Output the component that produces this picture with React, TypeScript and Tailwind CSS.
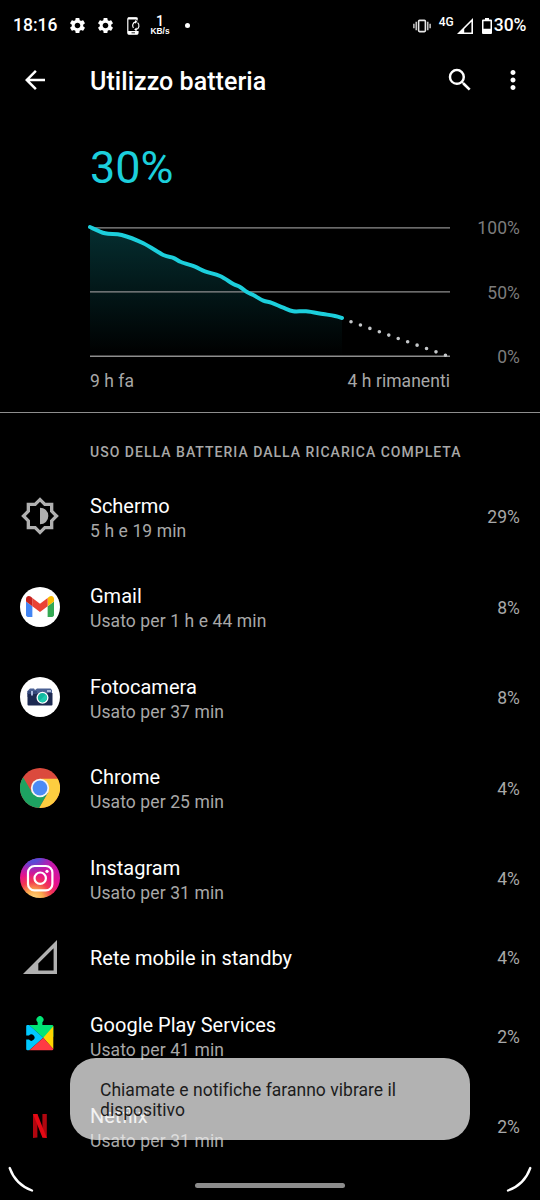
import type { ReactNode } from 'react';
import { MdArrowBack, MdMoreVert, MdSearch, MdSettings } from 'react-icons/md';

type Point = [number, number];

const LEVELS: Point[] = [
  [0, 9], [15, 15.3], [31.7, 17], [53.3, 25.3], [73.3, 37], [83.3, 39.8], [91, 44], [105, 48.7], [115, 53.3],
  [130, 58], [143.3, 66], [150, 69], [157, 74], [163.3, 77], [173.3, 82.7], [181.7, 84.8], [193.3, 89.7],
  [203.3, 93.2], [216, 93.3], [233, 96], [245, 98], [252, 100],
];

// Catmull-Rom spline through the points
function smoothPath(pts: Point[]) {
  let d = `M${pts[0][0]} ${pts[0][1]}`;
  for (let i = 0; i < pts.length - 1; i++) {
    const p0 = pts[i - 1] ?? pts[i];
    const p1 = pts[i];
    const p2 = pts[i + 1];
    const p3 = pts[i + 2] ?? p2;
    d += `C${p1[0] + (p2[0] - p0[0]) / 6} ${p1[1] + (p2[1] - p0[1]) / 6} ${p2[0] - (p3[0] - p1[0]) / 6} ${p2[1] - (p3[1] - p1[1]) / 6} ${p2[0]} ${p2[1]}`;
  }
  return d;
}

function BatteryChart() {
  const line = smoothPath(LEVELS);
  return (
    <svg width="360" height="149" viewBox="0 0 360 149" className="overflow-visible">
      <defs>
        <linearGradient id="area" x1="0" y1="9" x2="0" y2="138" gradientUnits="userSpaceOnUse">
          <stop offset="0" stopColor="#052e30" />
          <stop offset="1" stopColor="#052e30" stopOpacity="0" />
        </linearGradient>
      </defs>
      <path d={`${line}V138H0Z`} fill="url(#area)" />
      <path d="M0 9.9H360M0 73.9H360M0 138.2H360" stroke="#8e8e8e" strokeWidth="1.4" />
      <path d={line} fill="none" stroke="#1ccfdc" strokeWidth="4" strokeLinecap="round" />
      <path d="M261 103.7L356 137.4" stroke="#c4c7c9" strokeWidth="3.6" strokeLinecap="round" strokeDasharray="0 10.02" />
    </svg>
  );
}

function PhoneSyncIcon() {
  return (
    <svg width="14" height="18" viewBox="0 0 14 18" fill="none">
      <path d="M10 3.5V1.8Q10 .8 9 .8H2Q.8 .8 .8 2V16Q.8 17.2 2 17.2H9.8Q11 17.2 11 16V14" stroke="#fff" strokeWidth="1.2" />
      <path d="M1 .5H10.5V2.5H1ZM1 14H11V17.3H1Z" fill="#fff" />
      <path d="M4.5 15.8H8" stroke="#000" strokeWidth=".8" />
      <path d="M8.5 4.8A4 4 0 0 0 6.4 11M10.6 5.6A4 4 0 0 1 9 12.5" stroke="#fff" strokeWidth="1.2" />
      <path d="M8 2.9L10.4 4.8L8 6.7ZM9.6 10.6L7.2 12.5L9.6 14.4Z" fill="#fff" />
    </svg>
  );
}

function VibrateIcon() {
  return (
    <svg width="18" height="14" viewBox="0 0 18 14" fill="none" stroke="#e8e8e8">
      <rect x="5.6" y="1.4" width="6.8" height="11.2" rx="1" strokeWidth="1.6" />
      <path d="M3.2 2.8V11.2M14.8 2.8V11.2M.9 4.8V9.2M17.1 4.8V9.2" strokeWidth="1.3" />
    </svg>
  );
}

function SignalIcon({ className }: { className: string }) {
  return (
    <svg viewBox="2 2 20 20" className={className} fill="currentColor">
      <path fillRule="evenodd" d="M2 22H22V2ZM11 20V15.83L20 6.83V20Z" />
    </svg>
  );
}

function StatusBar() {
  return (
    <div className="flex h-[50px] items-center justify-between pt-px pr-[13.5px] pl-[13px] text-[17.5px] font-medium">
      <div className="flex items-center">
        <span className="w-[55px]">18:16</span>
        <MdSettings className="mr-[9px] size-[19px]" />
        <MdSettings className="mr-3 size-[19px]" />
        <PhoneSyncIcon />
        <div className="ml-2 flex w-[22px] flex-col items-center">
          <span className="text-[14px] leading-[11px]">1</span>
          <span className="font-['Liberation_Sans',sans-serif] text-[8.4px] leading-[8px] font-bold">KB/s</span>
        </div>
        <span className="ml-[14px] size-[5px] rounded-full bg-white" />
      </div>
      <div className="flex items-center">
        <VibrateIcon />
        <span className="mr-[3px] ml-2 -mt-2 text-[12px] leading-3">4G</span>
        <SignalIcon className="mr-[9px] size-4" />
        <svg width="10" height="16" viewBox="0 0 10 16" className="mr-[2px]">
          <path fill="#fff" fillRule="evenodd" d="M3 0H7V1.6H9Q10 1.6 10 2.6V15Q10 16 9 16H1Q0 16 0 15V2.6Q0 1.6 1 1.6H3ZM1.5 3.2V10.8H8.5V3.2Z" />
        </svg>
        <span>30%</span>
      </div>
    </div>
  );
}

function BrightnessIcon() {
  return (
    <svg viewBox="0 0 24 24" className="size-10" fill="#b0b0b0">
      <path
        fillRule="evenodd"
        d="M20 15.31L23.31 12 20 8.69V4h-4.69L12 .69 8.69 4H4v4.69L.69 12 4 15.31V20h4.69L12 23.31 15.31 20H20zM18 14.48V18h-3.52L12 20.48 9.52 18H6v-3.52L3.52 12 6 9.52V6h3.52L12 3.52 14.48 6H18v3.52L20.48 12z"
      />
      <path d="M12 7V17A5 5 0 0 0 12 7Z" />
    </svg>
  );
}

function GmailIcon() {
  return (
    <div className="flex size-10 items-center justify-center rounded-full bg-white">
      <svg width="28" height="21" viewBox="52 42 88 66">
        <path fill="#4285f4" d="M58 108h14V74L52 59v43c0 3.32 2.69 6 6 6" />
        <path fill="#34a853" d="M120 108h14c3.32 0 6-2.69 6-6V59l-20 15" />
        <path fill="#fbbc04" d="M120 48v26l20-15v-8c0-7.42-8.47-11.65-14.4-7.2" />
        <path fill="#ea4335" d="M72 74V48l24 18 24-18v26L96 92" />
        <path fill="#c5221f" d="M52 51v8l20 15V48l-5.6-4.2c-5.94-4.45-14.4-.22-14.4 7.2" />
      </svg>
    </div>
  );
}

function CameraIcon() {
  return (
    <svg viewBox="0 0 40 40" className="size-10">
      <circle cx="20" cy="20" r="20" fill="#fff" />
      <path d="M8.5 13L10 11.5H14L15 13L17 11.5H30.5L32 13V20H7.5V14Z" fill="#4a6093" />
      <path d="M7.5 16H32.5V27.5Q32.5 28.5 31.5 28.5H8.5Q7.5 28.5 7.5 27.5Z" fill="#1c2951" />
      <path d="M7.5 14H17V17H7.5Z" fill="#34477a" />
      <path d="M27 14H31" stroke="#c5d0e8" strokeWidth="1.6" />
      <path d="M12 14V18.5" stroke="#b9c8e8" strokeWidth="1.8" />
      <circle cx="22.5" cy="20.8" r="6" fill="#fff" />
      <circle cx="22.5" cy="20.8" r="4.7" fill="#12b89f" />
      <path d="M19.2 24.1A4.7 4.7 0 0 0 25.8 17.5Z" fill="#22cbb2" />
    </svg>
  );
}

function ChromeIcon() {
  return (
    <svg viewBox="-20 -20 40 40" className="size-10">
      <circle r="20" fill="#db4a3d" />
      <path d="M0 -9.2H17.76A20 20 0 0 1 -.91 19.98L7.97 4.6Z" fill="#fdcd40" />
      <path d="M7.97 4.6L-.91 19.98A20 20 0 0 1 -16.85 -10.78L-7.97 4.6Z" fill="#1da261" />
      <circle r="9.2" fill="#f4f4f4" />
      <circle r="7.4" fill="#4c8bf5" />
    </svg>
  );
}

function InstagramIcon() {
  return (
    <svg viewBox="0 0 40 40" className="size-10">
      <defs>
        <radialGradient id="igWarm" cx="14" cy="42" r="38" gradientUnits="userSpaceOnUse">
          <stop offset="0" stopColor="#fee08a" />
          <stop offset=".26" stopColor="#fba84c" />
          <stop offset=".48" stopColor="#f23a50" />
          <stop offset=".7" stopColor="#e8108a" />
          <stop offset="1" stopColor="#c818a8" />
        </radialGradient>
        <radialGradient id="igCool" cx="12" cy="-5" r="25" gradientUnits="userSpaceOnUse">
          <stop offset="0" stopColor="#3b62e4" />
          <stop offset=".4" stopColor="#4a50dc" stopOpacity=".85" />
          <stop offset="1" stopColor="#a020c0" stopOpacity="0" />
        </radialGradient>
      </defs>
      <circle cx="20" cy="20" r="20" fill="url(#igWarm)" />
      <circle cx="20" cy="20" r="20" fill="url(#igCool)" />
      <g fill="none" stroke="#fff" strokeWidth="2.2">
        <rect x="8" y="8" width="24.4" height="24.4" rx="6.5" />
        <circle cx="20.2" cy="20.2" r="5.7" />
      </g>
      <circle cx="27" cy="13.3" r="1.6" fill="#fff" />
    </svg>
  );
}

function PlayServicesIcon() {
  return (
    <svg viewBox="0 0 40 40" className="size-10">
      <defs>
        <clipPath id="puzzle">
          <path d="M7.5 9H17.6V6.2A3.5 3.5 0 1 1 22.4 6.2V9H32Q33.3 9 33.3 10.3V33Q33.3 34.3 32 34.3H7.5Q6.2 34.3 6.2 33V23.6H9A3.1 3.1 0 1 0 9 19.6H6.2V10.3Q6.2 9 7.5 9Z" />
        </clipPath>
      </defs>
      <g clipPath="url(#puzzle)">
        <path d="M0 0H40V20L23.3 21.8L9 9H0Z" fill="#00e676" />
        <path d="M6 6.3V37.2L23.3 21.8Z" fill="#00c8ff" />
        <path d="M23.3 21.8L34 9.5V34Z" fill="#ffd500" />
        <path d="M23.3 21.8L34 33.8V35H8.5Z" fill="#ff3a44" />
      </g>
    </svg>
  );
}

function NetflixIcon() {
  return (
    <svg viewBox="0 0 40 40" className="size-10">
      <path d="M13 8H17.4V31.5L13 32ZM22.4 8H26.8V32L22.4 31.5Z" fill="#b1060f" />
      <path d="M13 8H17.4L26.8 32L22.4 31.5Z" fill="#e50914" />
    </svg>
  );
}

interface Usage {
  name: string;
  detail?: string;
  percent: string;
  icon: ReactNode;
}

const USAGE: Usage[] = [
  { name: 'Schermo', detail: '5 h e 19 min', percent: '29%', icon: <BrightnessIcon /> },
  { name: 'Gmail', detail: 'Usato per 1 h e 44 min', percent: '8%', icon: <GmailIcon /> },
  { name: 'Fotocamera', detail: 'Usato per 37 min', percent: '8%', icon: <CameraIcon /> },
  { name: 'Chrome', detail: 'Usato per 25 min', percent: '4%', icon: <ChromeIcon /> },
  { name: 'Instagram', detail: 'Usato per 31 min', percent: '4%', icon: <InstagramIcon /> },
  {
    name: 'Rete mobile in standby',
    percent: '4%',
    icon: <SignalIcon className="ml-[3px] size-[34px] text-[#b0b0b0]" />,
  },
  { name: 'Google Play Services', detail: 'Usato per 41 min', percent: '2%', icon: <PlayServicesIcon /> },
  { name: 'Netflix', detail: 'Usato per 31 min', percent: '2%', icon: <NetflixIcon /> },
];

function UsageRow({ name, detail, percent, icon }: Usage) {
  return (
    <div className={`flex items-center px-5 ${detail ? 'h-[90.5px]' : 'h-[67px]'}`}>
      <div className="mr-[30px] w-10">{icon}</div>
      <div className={`flex-1 ${detail ? 'pt-[3px]' : 'pt-[2px]'}`}>
        <div className="text-[20px] leading-[26px]">{name}</div>
        {detail && (
          <div className="mt-px text-[17.5px] leading-[23px] tracking-[0.1px] text-[#a8a8a8]">{detail}</div>
        )}
      </div>
      <span className="pt-[2px] text-[17.5px] tracking-[0.1px] text-[#a8a8a8]">{percent}</span>
    </div>
  );
}

export default function App() {
  return (
    <div className="relative h-[1200px] w-[540px] overflow-hidden bg-black font-[Roboto,sans-serif] text-white">
      <StatusBar />

      <header className="flex h-[60px] items-center px-5">
        <MdArrowBack className="mr-10 size-[30px]" />
        <h1 className="flex-1 pt-[3px] text-[25px] font-medium tracking-[0.05px]">Utilizzo batteria</h1>
        <MdSearch className="mr-[23px] size-[30px]" />
        <MdMoreVert className="-mr-[7.5px] size-[30px]" />
      </header>

      <section className="h-[303px] border-b border-[#8e8e8e] pt-[31px] pr-5 pl-[90px]">
        <div className="h-[77px] text-[45px] leading-[54px] text-[#1ccfdc]">30%</div>
        <div className="flex h-[149px] justify-between">
          <BatteryChart />
          <div className="flex flex-col justify-between text-right text-[17.5px] leading-5 tracking-[0.1px] text-[#7c7c7c]">
            <span>100%</span>
            <span>50%</span>
            <span>0%</span>
          </div>
        </div>
        <div className="mt-1 flex w-[360px] justify-between text-[17.5px] leading-5 tracking-[0.05px] text-[#a8a8a8]">
          <span>9 h fa</span>
          <span>4 h rimanenti</span>
        </div>
      </section>

      <h2 className="h-[58px] pt-[29px] pl-[90px] text-[14px] leading-5 font-medium tracking-[1.02px] text-[#a8a8a8]">
        USO DELLA BATTERIA DALLA RICARICA COMPLETA
      </h2>

      {USAGE.map((u) => (
        <UsageRow key={u.name} {...u} />
      ))}

      <div className="absolute top-[1058px] left-[70px] h-[82px] w-[400px] rounded-[26px] bg-[#eeeeee]/75 px-[30px] pt-[21.5px] text-[17.5px] leading-[20.5px] tracking-[0.03px] text-[#1c1c1c]">
        Chiamate e notifiche faranno vibrare il dispositivo
      </div>

      {/* navigation pill and screen corner hints */}
      <div className="absolute bottom-[12.5px] left-[195px] h-[5px] w-[150px] rounded-full bg-[#8c8c8c]" />
      <svg className="absolute bottom-0 left-0" width="540" height="40" fill="none" stroke="#fff" strokeWidth="2.3" strokeLinecap="round">
        <path d="M9.7 8Q15.5 24.5 32 30.5M530.3 8Q524.5 24.5 508 30.5" />
      </svg>
    </div>
  );
}
